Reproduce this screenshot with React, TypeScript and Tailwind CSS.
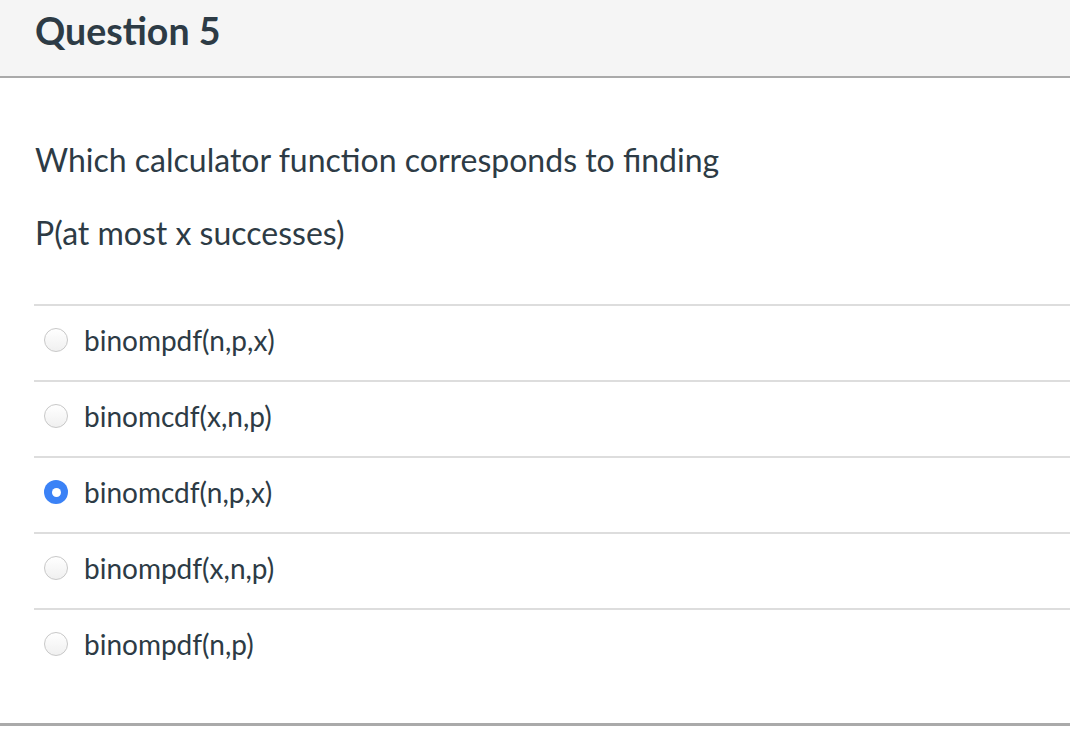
import React, { useState } from 'react';

const answers = [
    'binompdf(n,p,x)',
    'binomcdf(x,n,p)',
    'binomcdf(n,p,x)',
    'binompdf(x,n,p)',
    'binompdf(n,p)',
];

const App: React.FC = () => {
    const [selected, setSelected] = useState(2);

    return (
        <div className="w-[1070px] h-[734px] bg-white text-[#2d3b45] font-['Lato','Noto_Sans',sans-serif]">
            <div className="h-[78px] bg-[#f5f5f5] border-b-2 border-[#aaaaaa] px-[35px] flex items-center">
                <h2 className="text-[37.5px] font-bold leading-none pb-[14px]">Question 5</h2>
            </div>

            <div className="pl-[34px]">
                <div className="pl-[1px] pt-[64px] pb-[53px] text-[32px] leading-[36px]">
                    <p>Which calculator function corresponds to finding</p>
                    <p className="mt-[37px]">P(at most x successes)</p>
                </div>

                <div>
                    {answers.map((a, i) => (
                        <label
                            key={a}
                            className="flex items-center h-[76px] pb-[6px] border-t-2 border-[#dddddd] cursor-pointer"
                            onClick={() => setSelected(i)}
                        >
                            <span className="ml-[10px] mr-[16px] w-[24px] h-[24px] flex items-center justify-center">
                                {selected === i ? (
                                    <span className="w-[24px] h-[24px] rounded-full bg-[#3b82f6] flex items-center justify-center">
                                        <span className="w-[9px] h-[9px] rounded-full bg-white" />
                                    </span>
                                ) : (
                                    <span className="w-[24px] h-[24px] rounded-full border border-[#c8c8c8] bg-gradient-to-b from-white to-[#f0f0f0]" />
                                )}
                            </span>
                            <span className="text-[28px]">{a}</span>
                        </label>
                    ))}
                </div>
            </div>
            <div className="mt-[39px] border-b-[3px] border-[#aaaaaa]" />
        </div>
    );
};

export default App;
